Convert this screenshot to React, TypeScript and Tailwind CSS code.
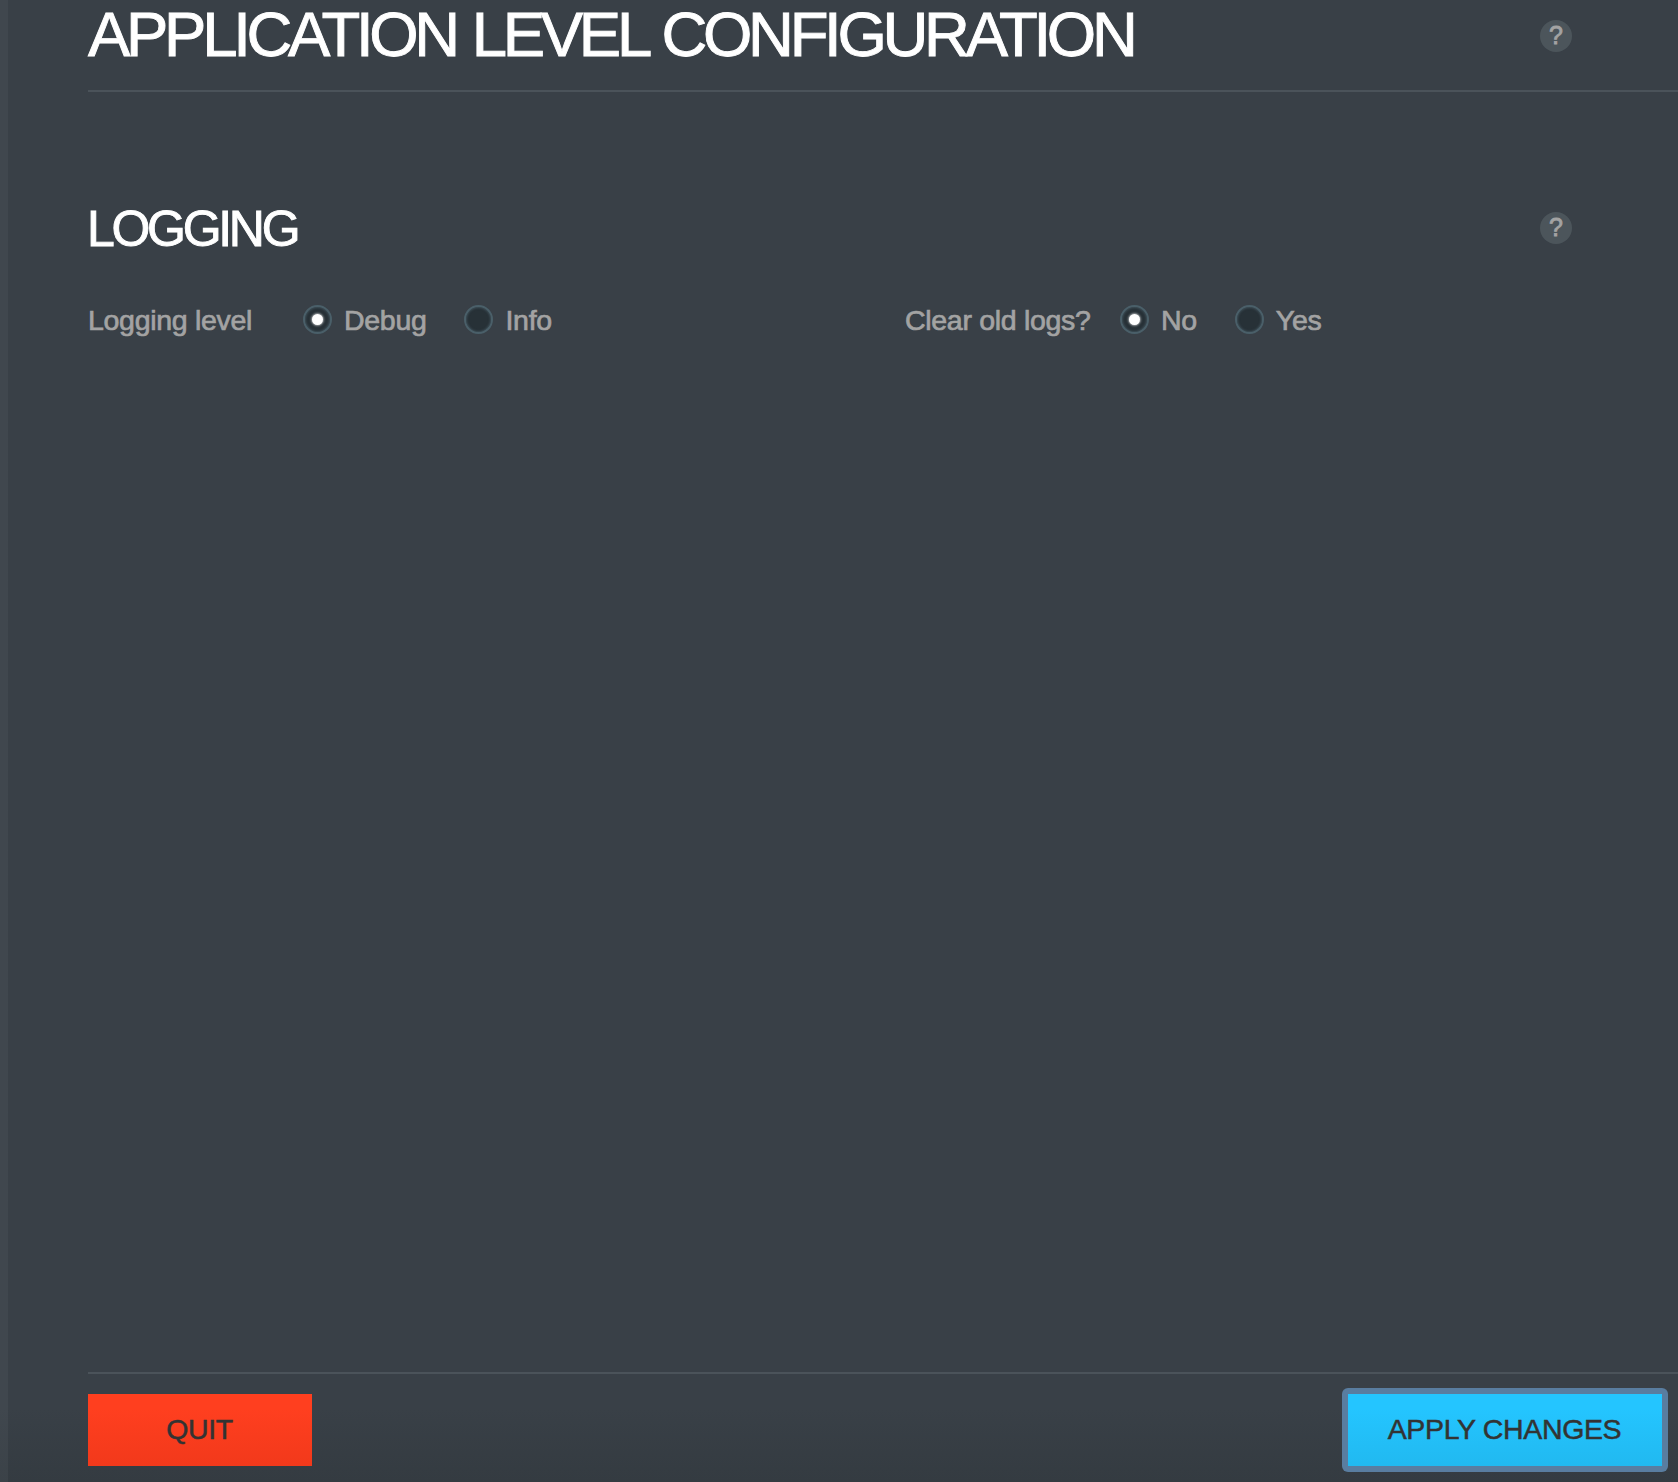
import { useState } from "react";

function HelpBadge() {
  return (
    <button
      type="button"
      aria-label="Help"
      className="flex size-8 shrink-0 items-center justify-center rounded-full bg-[#4c555b] pb-0.5 text-[25px] leading-none text-[#a3a3a3] [-webkit-text-stroke:0.8px_#a3a3a3]"
    >
      ?
    </button>
  );
}

type RadioProps = {
  name: string;
  label: string;
  checked: boolean;
  onSelect: () => void;
};

function Radio({ name, label, checked, onSelect }: RadioProps) {
  return (
    <label className="flex items-center gap-3">
      <input type="radio" name={name} checked={checked} onChange={onSelect} className="sr-only" />
      <span className="-mt-px flex size-[29px] shrink-0 items-center justify-center rounded-full border-2 border-[#4a5f69] bg-[#273137] shadow-[inset_0_0_2px_1px_#3d4d56]">
        {checked && <span className="size-[11px] rounded-full bg-white shadow-[0_0_2px_1px_#ffffff88]" />}
      </span>
      <span>{label}</span>
    </label>
  );
}

export default function App() {
  const [level, setLevel] = useState("Debug");
  const [clear, setClear] = useState("No");

  return (
    <div className="flex h-[1482px] w-[1678px] overflow-hidden bg-[#394047] font-['Liberation_Sans',Arial,sans-serif]">
      <div className="w-2 shrink-0 bg-linear-to-b from-[#40474e] from-95% to-[#3b4248]" />
      <main className="flex flex-1 flex-col bg-linear-to-b from-[#394047] from-95% to-[#343b41] pl-20">
        <header className="flex h-[92px] shrink-0 items-start justify-between border-b-2 border-[#4b535a] pr-[106px]">
          <h1 className="whitespace-nowrap text-[63.5px] leading-[68px] tracking-[-4.3px] text-white [word-spacing:2.5px] [-webkit-text-stroke:0.9px_white]">
            APPLICATION LEVEL CONFIGURATION
          </h1>
          <div className="pt-5">
            <HelpBadge />
          </div>
        </header>

        <section className="flex-1 pt-[106px]">
          <div className="flex h-[60px] items-center justify-between pr-[106px]">
            <h2 className="-ml-px pt-0.5 text-[50px] leading-[60px] tracking-[-3.3px] text-white [-webkit-text-stroke:0.9px_white]">
              LOGGING
            </h2>
            <HelpBadge />
          </div>
          <div className="mt-[46px] flex h-8 items-center text-[28.5px] leading-8 tracking-[-0.3px] text-[#a3a3a3] [-webkit-text-stroke:0.7px_#a3a3a3]">
            <div className="flex w-[817px] items-center">
              <span className="w-[215px]">Logging level</span>
              <div className="flex gap-[38px]">
                {["Debug", "Info"].map((o) => (
                  <Radio key={o} name="level" label={o} checked={level === o} onSelect={() => setLevel(o)} />
                ))}
              </div>
            </div>
            <span className="w-[215px]">Clear old logs?</span>
            <div className="flex gap-[38px]">
              {["No", "Yes"].map((o) => (
                <Radio key={o} name="clear" label={o} checked={clear === o} onSelect={() => setClear(o)} />
              ))}
            </div>
          </div>
        </section>

        <footer className="flex h-[110px] shrink-0 items-start justify-between border-t-2 border-[#4b535a] pt-3.5 pr-2.5 text-[28.5px] text-[#333333] [-webkit-text-stroke:0.5px_#333333]">
          <button
            type="button"
            className="mt-1.5 h-18 w-56 bg-linear-to-b from-[#ff3f1f] from-20% to-[#f2391b] pr-px pb-0.5 tracking-[-0.4px]"
          >
            QUIT
          </button>
          <div className="rounded-md bg-[#597da0] p-1.5">
            <button
              type="button"
              className="block h-18 w-[314px] bg-linear-to-b from-[#24c5ff] from-20% to-[#21b9f0] pr-px pb-0.5 tracking-[-0.35px]"
            >
              APPLY CHANGES
            </button>
          </div>
        </footer>
      </main>
    </div>
  );
}
